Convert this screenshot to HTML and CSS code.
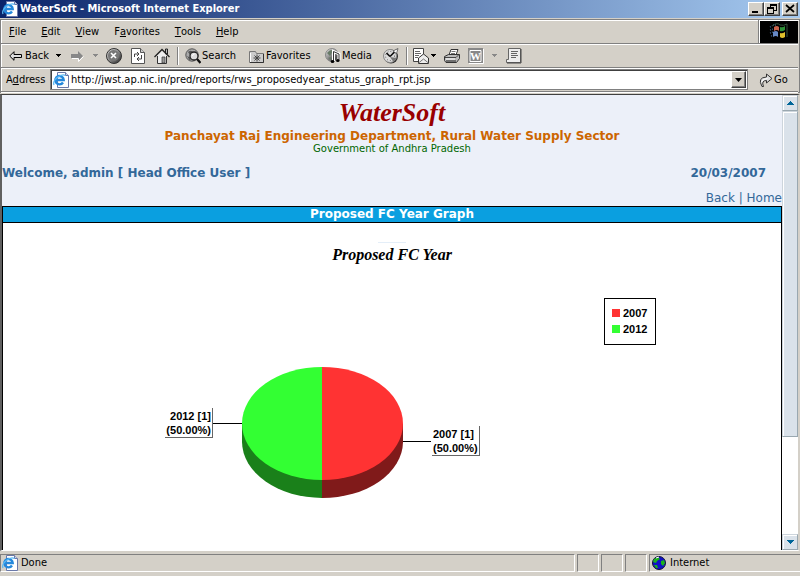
FILE: index.html
```html
<!DOCTYPE html>
<html lang="en">
<head>
<meta charset="utf-8">
<title>WaterSoft - Microsoft Internet Explorer</title>
<link rel="stylesheet" href="styles.css">
</head>
<body>
<svg class="defs" aria-hidden="true">
  <defs>
    <linearGradient id="ball" x1="0" y1="0" x2="1" y2="1"><stop offset="0" stop-color="#eee"/><stop offset=".5" stop-color="#888"/><stop offset="1" stop-color="#222"/></linearGradient>
    <symbol id="ie" viewBox="0 0 16 16">
      <path d="M4.500.5h8l3 3v12h-11z" fill="#fff" stroke="#6a78a8"/>
      <path d="M12.500.5v3h3" fill="#ccd4ee" stroke="#6a78a8"/>
      <path d="M10 10.500A4.200 4.200 0 1 1 10.700 8H3" fill="none" stroke="#2488dc" stroke-width="2.400"/>
      <path d="M1 13C-1 8 8 1 12.500 3.500" fill="none" stroke="#58b8f4" stroke-width="1.200"/>
    </symbol>
    <symbol id="tri" viewBox="0 0 5 3"><path d="M0 0h5v1H4v1H3v1H2V2H1V1H0z" fill="currentColor"/></symbol>
  </defs>
</svg>
<div class="window">
  <header class="title-bar">
    <svg class="icon"><use href="#ie"/></svg>
    <h1>WaterSoft - Microsoft Internet Explorer</h1>
    <div class="window-buttons">
      <button type="button" aria-label="Minimize"><svg width="12" height="10"><path d="M2 7h6v2H2z"/></svg></button>
      <button type="button" aria-label="Restore"><svg width="12" height="10"><path d="M4 0h7v7H8V6h2V2H5v1H4zM1 3h7v7H1zM2 5v4h5V5z" fill-rule="evenodd"/></svg></button>
      <button type="button" class="close" aria-label="Close"><svg width="12" height="10"><path d="M2 1l8 7M10 1L2 8" stroke="#000" stroke-width="1.700"/></svg></button>
    </div>
  </header>
  <div class="bars">
    <div class="menu-row">
      <nav class="menu" aria-label="Menu">
        <button type="button"><u>F</u>ile</button>
        <button type="button"><u>E</u>dit</button>
        <button type="button"><u>V</u>iew</button>
        <button type="button">F<u>a</u>vorites</button>
        <button type="button"><u>T</u>ools</button>
        <button type="button"><u>H</u>elp</button>
      </nav>
      <div class="throbber">
        <svg width="20" height="18" viewBox="0 0 20 18">
          <path d="M1 4l2-1M1 7l3-1M1 10l3-1M2 13l3-1M4 2h3" stroke="#38567a" stroke-width="1.500" stroke-dasharray="1 1"/>
          <path d="M5 4q3-2 5 0v4q-2-2-5 0z" fill="#c8634c"/><path d="M11 4q3 1 5-1v4q-3 2-5 1z" fill="#2e9238"/>
          <path d="M4 9q3-2 5 0v5q-2-2-5 0z" fill="#6688c4"/><path d="M11 10q2 1 5-1v5q-3 2-5 0z" fill="#e0c02c"/>
          <path d="M3 3q5-4 8-1 4 1 7-1v13" fill="none" stroke="#35513d"/>
        </svg>
      </div>
    </div>
    <div class="toolbar">
      <button type="button"><svg width="13" height="12" viewBox="0 0 13 12"><path d="M.7 6L5 1.700V4.500h7.500v3H5v2.800z" fill="#ddd" stroke="#000"/></svg><span class="back-label">Back</span></button>
      <button type="button" aria-label="Back history"><svg class="tri"><use href="#tri"/></svg></button>
      <button type="button" class="off" aria-label="Forward"><svg width="14" height="12" viewBox="0 0 14 12"><path d="M0 4h7V1l5 5-5 5V8H0z" fill="#888"/><path d="M1 8.500h6.500v3l5-5" fill="none" stroke="#fff"/></svg></button>
      <button type="button" class="off" aria-label="Forward history"><svg class="tri"><use href="#tri"/></svg></button>
      <button type="button" aria-label="Stop"><svg class="icon" viewBox="0 0 16 16"><circle cx="8" cy="8" r="7.500" fill="url(#ball)" stroke="#333"/><circle cx="7.500" cy="7.500" r="5.500" fill="#777"/><path d="M5 5l5 5m0-5l-5 5" stroke="#fff" stroke-width="1.600"/></svg></button>
      <button type="button" aria-label="Refresh"><svg width="14" height="16" viewBox="0 0 14 16"><path d="M.5.5h9l4 4v11H.5z" fill="#fff" stroke="#555"/><path d="M9.500.5v4h4" fill="#ccc" stroke="#555"/><path d="M3.500 9V6H8M6 4l2 2-2 2M10.500 7v4H6M8 9l-2 2 2 2" fill="none" stroke="#444"/></svg></button>
      <button type="button" aria-label="Home"><svg class="icon" viewBox="0 0 16 16"><path d="M11.500 1h2v5h-2z" fill="#bbb" stroke="#222"/><path d="M3 8l5-5 5 5v7.500H3z" fill="#eee"/><path d="M3.500 8v7.500h9V8" fill="none" stroke="#333"/><path d="M.5 9L8 1.500 15.500 9" fill="none" stroke="#222" stroke-width="1.300"/><path d="M8 9h3v6H8z" fill="#999" stroke="#333" stroke-width=".7"/></svg></button>
      <span class="sep"></span>
      <button type="button"><svg class="icon" viewBox="0 0 16 16"><circle cx="7" cy="7" r="6.200" fill="#aaa" stroke="#555"/><path d="M3 4q4-3 5 1l-3 2zM2 8l4 2-1 3" fill="#555"/><circle cx="9" cy="8" r="4" fill="#ddd" stroke="#222" stroke-width="1.300"/><path d="M12 11l3.500 4" stroke="#111" stroke-width="2.300"/><path d="M7.500 8q0-2 2-2" stroke="#fff" fill="none"/></svg><span>Search</span></button>
      <button type="button"><svg class="icon" viewBox="0 0 16 16"><path d="M.5 3.500h6l1 2h7v9H.5z" fill="#ccc" stroke="#777"/><path d="M14.500 6v8.500H1" fill="none" stroke="#333"/><path d="M1.500 5v9" stroke="#fff"/><path d="M8 6.500v7M4.500 10h7M5.500 7.500l5 5M10.500 7.500l-5 5" stroke="#444"/></svg><span>Favorites</span></button>
      <button type="button"><svg class="icon" viewBox="0 0 16 16"><circle cx="7" cy="7" r="6.500" fill="url(#ball)" stroke="#888"/><path d="M2 5q4-5 6-2L5 8zM3 10l3-1 1 3z" fill="#677a67"/><path d="M8.500 13V3.500L14 6v6" fill="none" stroke="#fff" stroke-width="3"/><path d="M8.500 13V3.500L14 6v6" fill="none" stroke="#333"/><ellipse cx="7.500" cy="13.500" rx="1.800" ry="1.500"/><ellipse cx="12.800" cy="12.500" rx="1.800" ry="1.500"/></svg><span>Media</span></button>
      <button type="button" aria-label="History"><svg class="icon" viewBox="0 0 16 16"><circle cx="8" cy="8.500" r="7" fill="#333"/><circle cx="7" cy="8" r="6.500" fill="#ddd" stroke="#888"/><circle cx="7" cy="8" r="4.500" fill="none" stroke="#666" stroke-dasharray="1 2"/><path d="M7 9l6.500 1-3 4z" fill="#777"/><path d="M7 8.500L3.500 5M7 8.500l7-7" stroke="#111" stroke-width="1.700"/><path d="M10 3l5-2.500-1.500 5z" fill="#fff" stroke="#444" stroke-width=".7"/></svg></button>
      <span class="sep"></span>
      <button type="button" aria-label="Mail"><svg class="icon" viewBox="0 0 16 16"><path d="M.5.500h10v13H.5z" fill="#fff" stroke="#444"/><path d="M2 3.500h5M2 5.500h6M2 7.500h4M2 9.500h3" stroke="#666"/><path d="M5.500 10l5-4 5 4v5.500h-10z" fill="#eee" stroke="#333"/><path d="M5.500 15l5-4 5 4" fill="none" stroke="#777"/></svg></button>
      <button type="button" aria-label="Mail options"><svg class="tri"><use href="#tri"/></svg></button>
      <button type="button" aria-label="Print"><svg class="icon" viewBox="0 0 16 16"><path d="M5 7l2-5.500h7L12 7z" fill="#fff" stroke="#333"/><path d="M7.500 3.500h4M7 5.500h4" stroke="#777"/><path d="M.5 8.500l4-2h11v4l-3 4H2l-1.500-2z" fill="#bbb" stroke="#333"/><path d="M1 9.500h11l3-3" fill="none" stroke="#444"/><path d="M2 11h9" stroke="#fff"/><path d="M2 13h10" stroke="#222"/></svg></button>
      <button type="button" class="off" aria-label="Edit with Word"><svg class="icon" viewBox="0 0 16 16"><path d="M0 0h15v15H0z" fill="#888"/><path d="M15.500 1v14.500H1M2 2.500h11v11H2z" fill="none" stroke="#fff"/><text x="7.500" y="12" text-anchor="middle" class="word">W</text></svg></button>
      <button type="button" class="off" aria-label="Edit options"><svg class="tri"><use href="#tri"/></svg></button>
      <button type="button" aria-label="Discuss"><svg class="icon" viewBox="0 0 16 16"><path d="M2.500.5h12v14H.5v-3h2z" fill="#eee" stroke="#666"/><path d="M5 3.500h7M5 5.500h6M5 7.500h7M5 9.500h5" stroke="#666"/><path d="M15 1v14H1" fill="none" stroke="#444"/></svg></button>
    </div>
    <form class="address">
      <label for="url">A<u>d</u>dress</label>
      <div class="field">
        <svg class="icon"><use href="#ie"/></svg>
        <input id="url" type="text" value="http://jwst.ap.nic.in/pred/reports/rws_proposedyear_status_graph_rpt.jsp">
        <button type="button" class="drop" aria-label="Show addresses"><svg width="7" height="4"><path d="M0 0h7L3.500 4z"/></svg></button>
      </div>
      <button type="button" class="go"><svg width="14" height="16" viewBox="0 0 14 16"><path d="M3 14.500Q-2 5.500 7.500 5V2L13 6.500 7.500 11V8.500Q2 8.500 4.500 14.500z" fill="#ddd" stroke="#333"/><path d="M2.500 10q1-3.500 6-3.500" fill="none" stroke="#fff"/></svg><span>Go</span></button>
    </form>
  </div>
  <div class="viewport">
    <main class="page">
      <header class="site-header">
        <p class="brand">WaterSoft</p>
        <p class="department">Panchayat Raj Engineering Department, Rural Water Supply Sector</p>
        <p class="government">Government of Andhra Pradesh</p>
        <div class="welcome"><span>Welcome, admin [ Head Office User ]</span><time datetime="2007-03-20">20/03/2007</time></div>
        <nav class="links"><a href="#">Back</a> | <a href="#">Home</a></nav>
      </header>
      <section class="report">
        <h2>Proposed FC Year Graph</h2>
        <hr>
        <h3>Proposed FC Year</h3>
        <svg class="chart" width="530" height="230" viewBox="0 0 530 230" role="img" aria-label="Proposed FC Year pie chart">
          <path d="M115 134v18a80.500 56.500 0 0 0 80 56V134z" fill="#1a801a"/>
          <path d="M276 134v18a80.500 56.500 0 0 1-81 56V134z" fill="#801a1a"/>
          <path d="M195 77a80 56.500 0 0 0 0 113z" fill="#3f3"/>
          <path d="M195 77a81 56.500 0 0 1 0 113z" fill="#f33"/>
          <g fill="none" shape-rendering="crispEdges">
            <path d="M86 133.500h29M276 151.500h28" stroke="#000"/>
            <path d="M38 147.500h47.500V118M305 165.500h47.500V136" stroke="#666"/>
            <path d="M477.500 8.500h51v46h-51z" stroke="#000"/>
          </g>
          <path d="M485 19h8v8h-8z" fill="#f33"/>
          <path d="M485 35h8v8h-8z" fill="#3f3"/>
          <text x="84" y="130" text-anchor="end">2012 [1]</text>
          <text x="84" y="144" text-anchor="end">(50.00%)</text>
          <text x="306" y="148">2007 [1]</text>
          <text x="306" y="162">(50.00%)</text>
          <text x="496" y="27">2007</text>
          <text x="496" y="43">2012</text>
        </svg>
      </section>
    </main>
    <div class="scrollbar">
      <button type="button" aria-label="Scroll up"><svg width="7" height="4"><path d="M3 0h1v1h1v1h1v1h1v1H0V3h1V2h1V1h1z"/></svg></button>
      <div class="track"><div class="thumb"></div></div>
      <button type="button" aria-label="Scroll down"><svg width="7" height="4"><path d="M0 0h7v1H6v1H5v1H4v1H3V3H2V2H1V1H0z"/></svg></button>
    </div>
  </div>
  <footer class="status">
    <div class="message"><svg class="icon"><use href="#ie"/></svg><span>Done</span></div>
    <div></div><div></div><div></div>
    <div class="zone"><svg width="14" height="14" viewBox="0 0 14 14"><circle cx="7" cy="7" r="6.500" fill="#1010c8" stroke="#113"/><path d="M2 3l4-2 2 2-3 2-1 2-3-1zM9 5l3-1 1 3-2 3-2-2zM2 9l3 0 1 3-2 0z" fill="#1bb41b"/><path d="M4 2l3-1" stroke="#fff"/></svg><span>Internet</span></div>
  </footer>
</div>
</body>
</html>
```
FILE: styles.css
```css
* { box-sizing: border-box; }

body {
  margin: 0;
  font: 11px/14px "DejaVu Sans Condensed", "DejaVu Sans", sans-serif;
  color: #000;
  background: #d4d0c8;
}

h1, h2, h3, p { margin: 0; }

button {
  display: flex;
  align-items: center;
  padding: 0;
  border: 0;
  background: none;
  font: inherit;
  color: inherit;
}

svg { display: block; flex: none; }
.defs { position: absolute; width: 0; height: 0; }
.icon { width: 16px; height: 16px; }
.tri { width: 5px; height: 3px; }

.window { display: flex; flex-direction: column; height: 100vh; }

/* Title bar */
.title-bar {
  display: flex;
  align-items: center;
  gap: 2px;
  height: 18px;
  padding: 0 2px;
  background: linear-gradient(to right, #0a246a, #a6caf0);
  color: #fff;
}
.title-bar h1 { flex: 1; font-size: 11px; line-height: 16px; font-weight: bold; }
.window-buttons { display: flex; color: #000; }
.window-buttons button {
  justify-content: center;
  width: 16px;
  height: 14px;
  background: #d4d0c8;
  border: 1px solid;
  border-color: #fff #404040 #404040 #fff;
  box-shadow: inset -1px -1px #808080;
}
.window-buttons .close { margin-left: 2px; }

/* Menu, toolbar and address rows */
.bars {
  margin-top: 1px;
  padding-right: 1px;
  border: 1px solid #808080;
  box-shadow: inset 1px 1px #fff;
}
.menu-row, .toolbar, .address {
  height: 24px;
  border-bottom: 1px solid #808080;
  box-shadow: 0 1px #fff, inset 1px 1px #fff;
}
.menu-row { display: flex; }
.menu {
  display: flex;
  flex: 1;
  align-items: center;
  gap: 15px;
  padding-left: 8px;
  border-right: 1px solid #808080;
}
.throbber {
  display: flex;
  align-items: center;
  justify-content: center;
  width: 39px;
  margin-top: 1px;
  border-left: 1px solid #fff;
  background: #000;
}
.toolbar {
  display: grid;
  grid-template-columns: 47px 15px 22px 13px 25px 23px 23px 8px 64px 76px 58px 23px 7px 18px 13px 24px 24px 14px 16px;
  align-items: center;
  padding-left: 8px;
}
.toolbar button { gap: 1px; white-space: nowrap; }
.toolbar .back-label { margin-left: 2px; }
.off { color: #888; }
.sep { width: 2px; height: 18px; background: #808080; border-right: 1px solid #fff; }
.word { font: bold 11px "Liberation Serif", serif; fill: #fff; }
.address { display: flex; align-items: center; padding-left: 5px; }
.address label { width: 44px; }
.field {
  display: flex;
  flex: 1;
  align-items: center;
  height: 21px;
  padding: 1px 1px 1px 2px;
  background: #fff;
  border: 1px solid #808080;
  box-shadow: inset 1px 1px #404040;
}
.field input {
  flex: 1;
  min-width: 0;
  height: 16px;
  padding: 0 2px;
  border: 0;
  outline: 0;
  background: none;
  font: inherit;
}
.drop {
  justify-content: center;
  width: 15px;
  height: 17px;
  background: #d4d0c8;
  border: 1px solid;
  border-color: #fff #404040 #404040 #fff;
  box-shadow: inset -1px -1px #808080;
}
.go { gap: 1px; width: 50px; padding-left: 11px; }

/* Web page */
.viewport {
  display: flex;
  flex: 1;
  min-height: 0;
  margin-top: 1px;
  border: 1px solid #808080;
  border-width: 1px 2px 1px 2px;
  border-color: #404040 #d4d0c8 #fff #606060;
}
.page {
  display: flex;
  flex: 1;
  flex-direction: column;
  overflow: hidden;
  background: #ecf0f9;
  font-family: "DejaVu Sans", Verdana, sans-serif;
}
.site-header { padding-top: 2px; text-align: center; color: #336899; }
.brand {
  font: italic bold 26px/32px "Liberation Serif", serif;
  color: #900;
}
.department { font-size: 12px; line-height: 14px; font-weight: bold; color: #cc6500; }
.government { font-size: 10px; line-height: 12px; color: #060; }
.welcome {
  display: flex;
  justify-content: space-between;
  padding: 10px 16px 10px 0;
  font-size: 12px;
  line-height: 16px;
  font-weight: bold;
}
.links { text-align: right; font-size: 12px; line-height: 15px; }
.links a { color: inherit; text-decoration: none; }
.report {
  flex: 1;
  border: 1px solid #000;
  border-bottom: 0;
  background: #fff;
  text-align: center;
}
.report h2 {
  border-bottom: 1px solid #000;
  background: #0a9fe0;
  color: #fff;
  font-size: 12px;
  line-height: 15px;
}
.report hr { width: 28px; height: 1px; margin: 19px auto 3px; border: 0; background: #e4eef8; }
.report h3 { font: italic bold 16px/18px "Liberation Serif", serif; }
.chart {
  margin: 26px auto 0;
  font: bold 11px "Liberation Sans", Arial, sans-serif;
}

.scrollbar { display: flex; flex-direction: column; width: 16px; background: #fff; }
.scrollbar button {
  justify-content: center;
  height: 16px;
  background: #dae2ea;
  border: 1px solid;
  border-color: #cdd5dc #9aa8b0 #9aa8b0 #cdd5dc;
  box-shadow: inset 1px 1px #fff;
  fill: #069;
}
.track { flex: 1; }
.thumb {
  height: 77%;
  background: #dae2ea;
  border: 1px solid;
  border-color: #cdd5dc #9aa8b0 #9aa8b0 #cdd5dc;
  box-shadow: inset 1px 1px #fff;
}

/* Status bar */
.status {
  display: grid;
  grid-template-columns: 1fr 22px 22px 22px 151px;
  gap: 2px;
  height: 25px;
  padding: 3px 0 4px;
}
.status div {
  display: flex;
  align-items: center;
  border: 1px solid;
  border-color: #808080 #fff #fff #808080;
}
.status .message { gap: 3px; padding-left: 1px; }
.status .zone { gap: 4px; padding-left: 2px; border-right: 0; }
```
